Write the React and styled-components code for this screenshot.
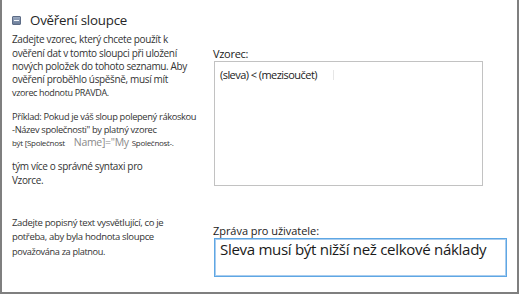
import React from "react";
import styled, { createGlobalStyle } from "styled-components";

const Global = createGlobalStyle`
  html, body { margin: 0; padding: 0; background: #ffffff; }
  body { font-family: "Open Sans", "Noto Sans", "Liberation Sans", sans-serif; }
  * { box-sizing: border-box; }
`;

const Frame = styled.div`
  width: 519px;
  height: 294px;
  border-left: 2px solid #7f7f7f;
  border-right: 2px solid #7f7f7f;
  border-bottom: 2px solid #7f7f7f;
  background: #fff;
  display: flex;
  flex-direction: row;
  overflow: hidden;
`;

const LeftColumn = styled.div`
  width: 212px;
  padding-left: 10px;
  display: flex;
  flex-direction: column;
`;

const RightColumn = styled.div`
  flex: 1;
  display: flex;
  flex-direction: column;
  padding-top: 47px;
`;

const Header = styled.div`
  margin-top: 11px;
  height: 18px;
  display: flex;
  align-items: center;
  gap: 9px;
  font-size: 13.3px;
  color: #262626;
  letter-spacing: -0.2px;
`;

const CollapseIcon = styled.span`
  width: 7px;
  height: 7px;
  border-radius: 1px;
  background: linear-gradient(#9aa9c0, #6c7d99);
  border: 1px solid #5d6c86;
  position: relative;
  display: inline-block;
  box-sizing: content-box;
  &::after {
    content: "";
    position: absolute;
    left: 1px;
    right: 1px;
    top: 3px;
    height: 1px;
    background: #f4f6fa;
  }
`;

const Block = styled.div`
  margin-top: ${(p) => p.$mt}px;
  display: flex;
  flex-direction: column;
  color: #333;
`;

const Line = styled.div`
  height: ${(p) => p.$lh}px;
  line-height: ${(p) => p.$lh}px;
  font-size: ${(p) => p.$size || 10}px;
  white-space: nowrap;
  letter-spacing: ${(p) => p.$ls ?? -0.35}px;
`;

const Chunk = styled.span`
  font-size: ${(p) => p.$size}px;
  color: ${(p) => p.$color || "#333"};
  margin-left: ${(p) => p.$ml || 0}px;
  letter-spacing: ${(p) => p.$ls ?? -0.3}px;
`;

const Label = styled.div`
  height: 14px;
  line-height: 14px;
  font-size: 11px;
  color: #222;
  margin-left: -1px;
  margin-top: ${(p) => p.$mt || 0}px;
  letter-spacing: ${(p) => p.$ls ?? -0.3}px;
`;

const FormulaBox = styled.div`
  width: 269px;
  height: 125px;
  border: 1px solid #c2c2c2;
  padding: 6px 5px;
  font-size: 11px;
  line-height: 14px;
  color: #222;
  letter-spacing: -0.55px;
  position: relative;
`;

const Caret = styled.span`
  position: absolute;
  left: 118px;
  top: 8px;
  width: 1px;
  height: 10px;
  background: #e6e6e6;
`;

const MessageBox = styled.div`
  width: 293px;
  height: 39px;
  border: 1px solid #5ea7e4;
  box-shadow: inset 0 0 0 1px #a9cdef;
  padding: 1px 5px;
  font-size: 15.1px;
  line-height: 18px;
  color: #1a1a1a;
  letter-spacing: -0.33px;
  white-space: nowrap;
`;

export default function App() {
  return (
    <>
      <Global />
      <Frame>
        <LeftColumn>
          <Header>
            <CollapseIcon />
            <span>Ověření sloupce</span>
          </Header>
          <Block $mt={4.3}>
            <Line $lh={13.3}>Zadejte vzorec, který chcete použít k</Line>
            <Line $lh={13.3}>ověření dat v tomto sloupci při uložení</Line>
            <Line $lh={13.3}>nových položek do tohoto seznamu. Aby</Line>
            <Line $lh={13.3}>ověření proběhlo úspěšně, musí mít</Line>
            <Line $lh={13.3} $size={9}>vzorec hodnotu PRAVDA.</Line>
          </Block>
          <Block $mt={10.7}>
            <Line $lh={13} $size={9.3}>Příklad: Pokud je váš sloup polepený rákoskou</Line>
            <Line $lh={13} $size={9.3}>-Název společnosti" by platný vzorec</Line>
            <Line $lh={13}>
              <Chunk $size={8}>být [Společnost</Chunk>
              <Chunk $size={10.5} $color="#8a8a8a" $ml={9}>Name]="My</Chunk>
              <Chunk $size={8} $ml={3}>Společnost-.</Chunk>
            </Line>
          </Block>
          <Block $mt={9.5}>
            <Line $lh={14}>tým více o správné syntaxi pro</Line>
            <Line $lh={14}>Vzorce.</Line>
          </Block>
          <Block $mt={28.75}>
            <Line $lh={14.5} $size={9.5}>Zadejte popisný text vysvětlující, co je</Line>
            <Line $lh={14.5} $size={9.5}>potřeba, aby byla hodnota sloupce</Line>
            <Line $lh={14.5} $size={9.2}>považována za platnou.</Line>
          </Block>
        </LeftColumn>
        <RightColumn>
          <Label>Vzorec:</Label>
          <FormulaBox>
            (sleva) &lt; (mezisoučet)
            <Caret />
          </FormulaBox>
          <Label $mt={38} $ls={-0.05}>Zpráva pro uživatele:</Label>
          <MessageBox>Sleva musí být nižší než celkové náklady</MessageBox>
        </RightColumn>
      </Frame>
    </>
  );
}
